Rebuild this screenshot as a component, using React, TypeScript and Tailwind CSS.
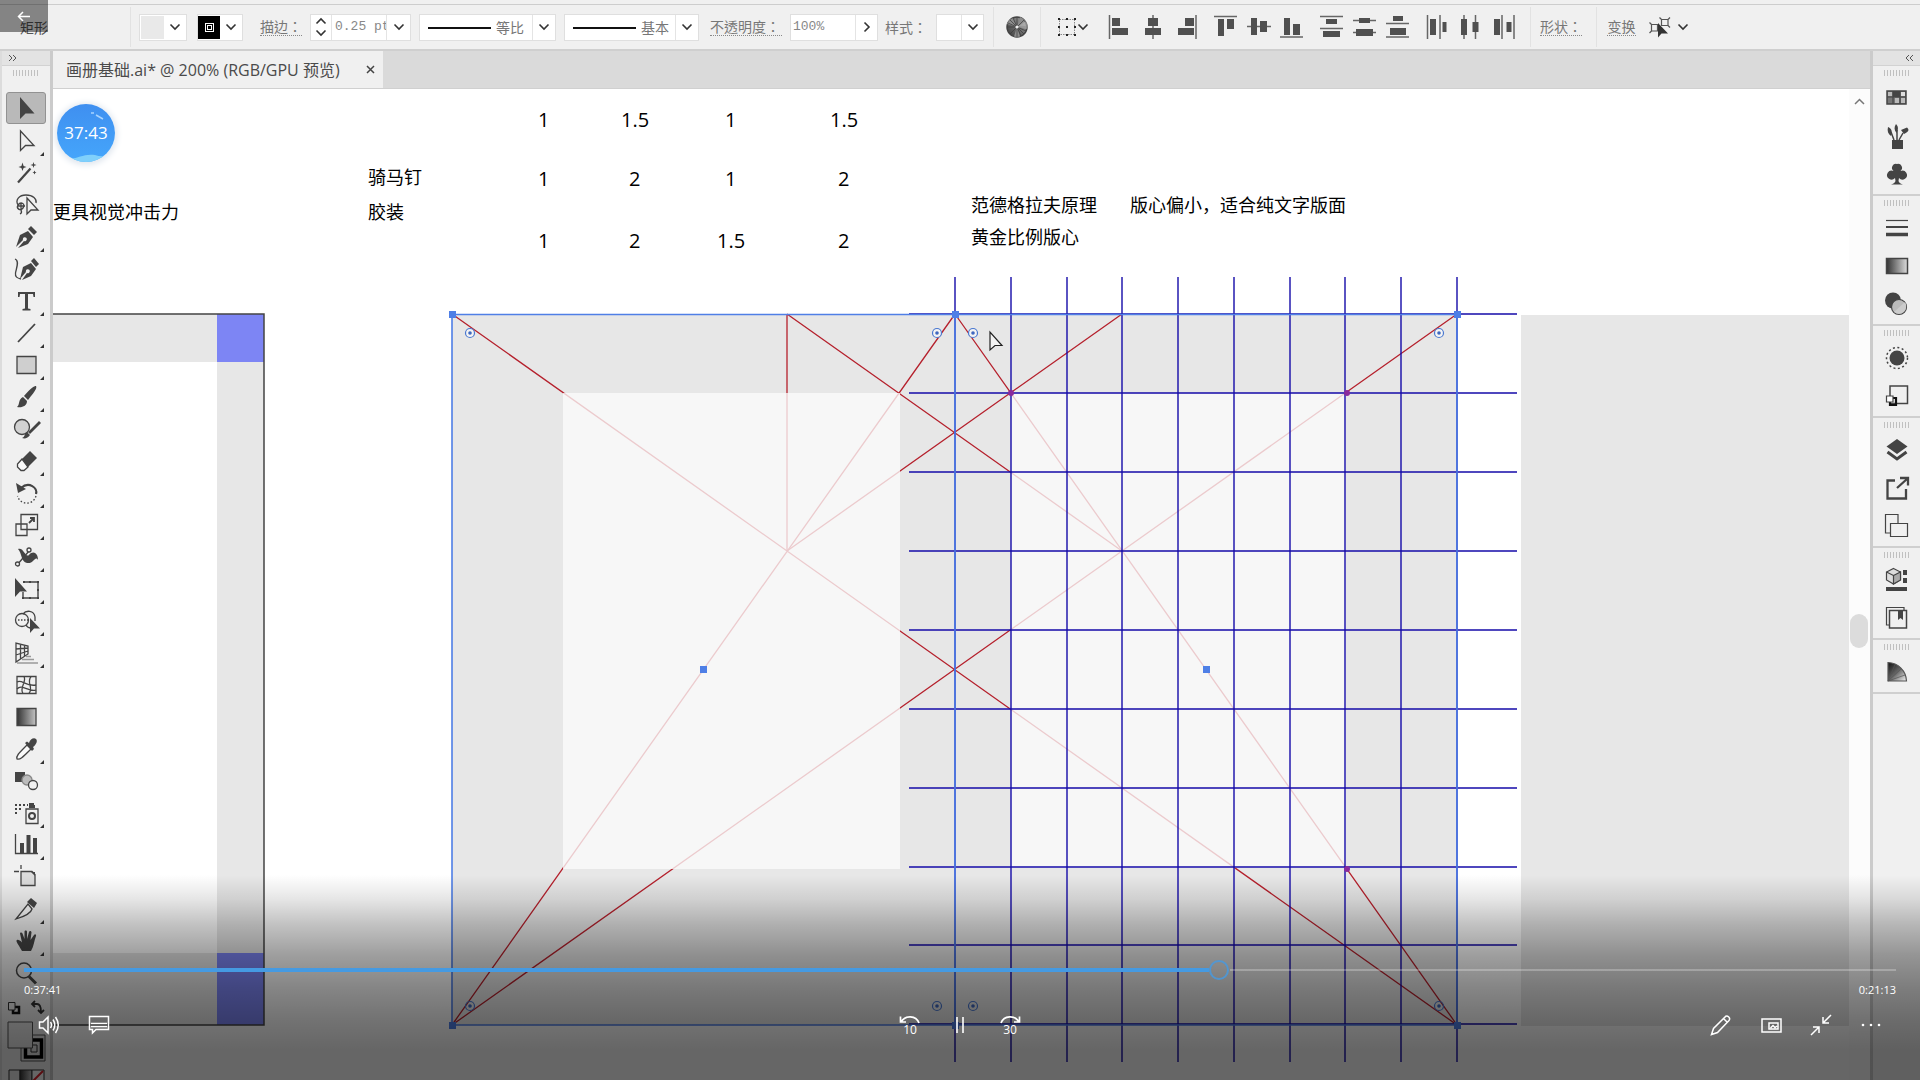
import React from "react";
import type { ReactNode } from "react";

const DARK = "#444444";

/* ---------- shared glyphs ---------- */

function Chevron({ className = "" }: { className?: string }) {
  return (
    <svg width="12" height="8" viewBox="0 0 12 8" className={className} fill="none" stroke="#333" strokeWidth="1.6">
      <path d="M1.5 1.5 L6 6 L10.5 1.5" />
    </svg>
  );
}

function Grip() {
  return (
    <svg width="26" height="6" viewBox="0 0 26 6" stroke="#c0c0c0" strokeWidth="1">
      <path d="M.5 0V6M3.5 0V6M6.5 0V6M9.5 0V6M12.5 0V6M15.5 0V6M18.5 0V6M21.5 0V6M24.5 0V6" />
    </svg>
  );
}

function Separator({ className = "" }: { className?: string }) {
  return <div className={`h-[40px] w-px shrink-0 bg-[#e2e2e2] ${className}`} />;
}

/* ---------- options bar ---------- */

const LABEL =
  "font-['Noto_Sans_CJK_TC','Noto_Sans_CJK_SC',sans-serif] text-[14px] leading-[17px] text-[#777] whitespace-nowrap shrink-0";
const BOX = "flex h-[27px] shrink-0 items-stretch border border-[#dfdfdf] bg-white";

function StrokeSelect({ label, text, className }: { label: string; text: string; className: string }) {
  return (
    <div className={`relative ${BOX} ${className}`}>
      <svg className="pointer-events-none absolute top-0 left-2" width="63" height="25">
        <path d="M0 13H63" stroke="#111" strokeWidth="2" />
      </svg>
      <select
        aria-label={label}
        className="w-full appearance-none bg-transparent pl-[76px] text-[14px] text-[#777] outline-none"
      >
        <option>{text}</option>
      </select>
      <div className="pointer-events-none absolute inset-y-0 right-0 flex w-[23px] items-center justify-center border-l border-[#e4e4e4]">
        <Chevron />
      </div>
    </div>
  );
}

const SOLID = "fill-[#505050] stroke-none";

const alignIcons: { name: string; cls: string; art: ReactNode }[] = [
  { name: "左对齐", cls: "", art: <><path d="M1.5 0V24" /><path className={SOLID} d="M4 3h8v8H4zM4 13h16v7H4z" /></> },
  { name: "水平居中", cls: "ml-[9px]", art: <><path d="M12 0V24" /><path className={SOLID} d="M7 3h10v8H7zM4 13h16v7H4z" /></> },
  { name: "右对齐", cls: "ml-[9px]", art: <><path d="M22 0V24" /><path className={SOLID} d="M11 3h9v8h-9zM4 13h16v7H4z" /></> },
  { name: "顶对齐", cls: "ml-4", art: <><path d="M0 1.5H23" /><path className={SOLID} d="M4 4h6v17H4zM13 4h7v10h-7z" /></> },
  { name: "垂直居中", cls: "ml-[9px]", art: <><path d="M0 11.5H24" /><path className={SOLID} d="M4 3h6v17H4zM13 6h7v11h-7z" /></> },
  { name: "底对齐", cls: "ml-[9px]", art: <><path d="M0 22H23" /><path className={SOLID} d="M4 3h6v17H4zM13 9h7v11h-7z" /></> },
  { name: "垂直顶分布", cls: "ml-4", art: <><path d="M0 1.5H23M0 13.5H23" /><path className={SOLID} d="M6 4h11v5H6zM3 16h17v6H3z" /></> },
  { name: "垂直居中分布", cls: "ml-[9px]", art: <><path d="M0 5.5H23M0 17.5H23" /><path className={SOLID} d="M6 3h11v5H6zM3 14h17v7H3z" /></> },
  { name: "垂直底分布", cls: "ml-[9px]", art: <><path d="M0 8.5H23M0 22H23" /><path className={SOLID} d="M7 1h10v5H7zM4 13h16v7H4z" /></> },
  { name: "水平左分布", cls: "ml-4", art: <><path d="M1.5 0V24M14 0V24" /><path className={SOLID} d="M4 4h6v16H4zM16.5 7h4v10h-4z" /></> },
  { name: "水平居中分布", cls: "ml-[9px]", art: <><path d="M5 0V24M16.5 0V24" /><path className={SOLID} d="M2 4h6v16H2zM13.5 7h6v10h-6z" /></> },
  { name: "水平右分布", cls: "ml-[9px]", art: <><path d="M10 0V24M22 0V24" /><path className={SOLID} d="M2 4h6v16H2zM14.5 7h5v10h-5z" /></> },
];

function OptionsBar() {
  return (
    <header className="shrink-0 border-b-2 border-[#cfcfcf] bg-[#f0f0f0] pt-1">
      <div className="flex h-[45px] items-center border-t border-[#cdcdcd] pl-5 pr-4">
        <span className="w-[110px] shrink-0 text-[14px] text-[#555]">矩形</span>
        <Separator />
        <button aria-label="填色" className={`${BOX} ml-2 w-[48px]`}>
          <span className="my-px ml-px w-[23px] bg-[#e9e9e9]" />
          <span className="flex flex-1 items-center justify-center"><Chevron /></span>
        </button>
        <button aria-label="描边颜色" className={`${BOX} ml-[10px] w-[46px]`}>
          <span className="my-px flex w-[22px] items-center justify-center bg-black">
            <span className="flex size-[9px] items-center justify-center border border-white bg-black">
              <span className="size-[5px] border border-white" />
            </span>
          </span>
          <span className="flex flex-1 items-center justify-center"><Chevron /></span>
        </button>
        <label htmlFor="stroke" className={`${LABEL} ml-[17px] w-[42px] border-b border-dotted border-[#888]`}>描边：</label>
        <div className={`${BOX} ml-2 w-[101px]`}>
          <button aria-label="调整粗细" className="flex w-[21px] flex-col items-center justify-around border-r border-[#e4e4e4]">
            <Chevron className="rotate-180" />
            <Chevron />
          </button>
          <input
            id="stroke"
            defaultValue="0.25 pt"
            className="w-[55px] border-r border-[#e4e4e4] pl-[3px] font-[Liberation_Mono,monospace] text-[13px] text-[#888] outline-none"
          />
          <button aria-label="粗细选项" className="flex flex-1 items-center justify-center"><Chevron /></button>
        </div>
        <StrokeSelect label="变量宽度" text="等比" className="ml-2 w-[137px]" />
        <StrokeSelect label="画笔定义" text="基本" className="ml-2 w-[135px]" />
        <label htmlFor="opacity" className={`${LABEL} ml-[11px] w-[72px] border-b border-dotted border-[#888]`}>不透明度：</label>
        <div className={`${BOX} ml-2 w-[88px]`}>
          <input
            id="opacity"
            defaultValue="100%"
            className="w-[65px] border-r border-[#e4e4e4] pl-[2px] font-[Liberation_Mono,monospace] text-[13px] text-[#888] outline-none"
          />
          <button aria-label="不透明度滑块" className="flex flex-1 items-center justify-center"><Chevron className="-rotate-90" /></button>
        </div>
        <span className={`${LABEL} ml-[7px] w-[44px]`}>样式：</span>
        <button aria-label="样式" className={`${BOX} ml-[7px] w-[48px]`}>
          <span className="w-[25px] border-r border-[#e4e4e4]" />
          <span className="flex flex-1 items-center justify-center"><Chevron /></span>
        </button>
        <Separator className="ml-[9px]" />
        <button aria-label="重新着色" className="ml-3 shrink-0">
          <svg width="22" height="22" viewBox="0 0 22 22">
            <defs>
              <linearGradient id="wheel" x1="0" y1="1" x2="1" y2="0">
                <stop offset="0" stopColor="#3c3c3c" />
                <stop offset=".5" stopColor="#6c6c6c" />
                <stop offset="1" stopColor="#a5a5a5" />
              </linearGradient>
            </defs>
            <circle cx="11" cy="11" r="10" fill="url(#wheel)" stroke="#444" strokeWidth="1.5" />
            <path d="M11 11L1 8A10 10 0 0 1 7 2ZM11 11L14 1A10 10 0 0 1 19 5ZM11 11L8 20.500A10 10 0 0 0 14 20.500Z" fill="#8d8d8d" />
            <path d="M11 1V21M1 11H21M4 4L18 18M18 4L4 18M7 2L15 20M2 7L20 15" stroke="#3a3a3a" strokeWidth=".7" />
            <path d="M11 11L20 5A11 11 0 0 1 21 13Z" fill="#ccc" opacity=".5" />
            <circle cx="11" cy="11" r="1.6" fill="#eee" />
          </svg>
        </button>
        <Separator className="ml-3" />
        <button aria-label="对齐所选对象" className="ml-4 flex shrink-0 items-center">
          <svg width="20" height="20" viewBox="0 0 20 20">
            <path d="M2.5 2.5H17.5V17.5H2.5Z" fill="none" stroke="#888" strokeDasharray="1.5 1" />
            <path d="M1 1h2v2H1zM9 1h2v2H9zM17 1h2v2h-2zM1 9h2v2H1zM9 9h2v2H9zM17 9h2v2h-2zM1 17h2v2H1zM9 17h2v2H9zM17 17h2v2h-2z" fill="#222" />
          </svg>
          <Chevron />
        </button>
        <div className="ml-[19px] flex shrink-0">
          {alignIcons.map((a) => (
            <button key={a.name} aria-label={a.name} className={a.cls}>
              <svg width="24" height="24" viewBox="0 0 24 24" fill="none" stroke="#666" strokeWidth="1.5">{a.art}</svg>
            </button>
          ))}
        </div>
        <Separator className="ml-[14px]" />
        <span className={`${LABEL} ml-[9px] w-[42px] border-b border-dotted border-[#888]`}>形状：</span>
        <Separator className="ml-[14px]" />
        <button className={`${LABEL} ml-[10px] w-[29px] border-b border-dotted border-[#888]`}>变换</button>
        <button aria-label="隔离选中的对象" className="ml-[13px] flex shrink-0 items-center gap-[6px]">
          <svg width="22" height="22" viewBox="0 0 22 22" fill="none" stroke="#555" strokeWidth="1.2">
            <path d="M12.5 3.5H19V9.500H12.5ZM10.5 1.5L12.5 3.5M21 1.5L19 3.5M21 11.5L19 9.5" />
            <path d="M2.5 8.5H8.5V15H2.5ZM.5 6.5L2.5 8.5M.5 17L2.5 15" />
            <path d="M9 7V21.5L12.5 17.5H19Z" fill="#333" stroke="none" />
          </svg>
          <Chevron />
        </button>
      </div>
    </header>
  );
}

/* ---------- left tools ---------- */

const F = { fill: DARK, stroke: "none" };

const tools: { name: string; more?: boolean; art: ReactNode }[] = [
  { name: "选择", art: <path {...F} d="M6 1V23L11.5 17.5H20.5Z" /> },
  { name: "直接选择", more: true, art: <path d="M6.5 2V21.5L11.5 16.5H20Z" /> },
  { name: "魔棒", art: <><path strokeWidth="2.2" d="M4 21.5L16.5 7.5" /><path {...F} d="M8.500 1.500L9.600 5L12.500 6L9.600 7L8.500 10L7.400 7L4.500 6L7.400 5ZM19.500 1L20.200 3.200L22.500 4L20.200 4.800L19.500 7L18.800 4.800L16.500 4L18.800 3.200ZM20.500 9.500L21.200 11L22.500 11.500L21.200 12L20.500 13.500L19.800 12L18.500 11.500L19.800 11Z" /></> },
  { name: "套索", art: <><path d="M4 12C1 7 5 2 12 2S23 6 22 10M4 12C7 8 12 11 9 15S2 15 4 12M7 10V17C8 19 8 20 6 21M3 13H11" /><path fill="#f0f0f0" d="M13 5V21L17 17H24Z" /></> },
  { name: "钢笔", more: true, art: <><path {...F} d="M2 22L6 10L14 6L19 12L14 19L4 23L10 16A2 2 0 1 0 9 15Z" /><path {...F} d="M14 4L17 1L23 7L20 10Z" /></> },
  { name: "曲率", art: <><path d="M1 2C6 4 2 12 1.5 16S3 21 7 22" /><path {...F} d="M6 22L9 10L17 6L22 12L17 19L8 23L13 16A2 2 0 1 0 12 15Z" /><path {...F} d="M17 4L20 1L25 7L22 10Z" /></> },
  { name: "文字", more: true, art: <path {...F} d="M4 3H21V8H19.5L19 5H14V19.5L16.5 20V21.5H8.5V20L11 19.5V5H6L5.5 8H4Z" /> },
  { name: "直线段", more: true, art: <path strokeWidth="1.8" d="M4 21L21 3" /> },
  { name: "矩形", more: true, art: <path fill="#cfcfcf" d="M3 3.5H22V20.5H3Z" /> },
  { name: "画笔", more: true, art: <path {...F} d="M22 1C23 3 22 5 14 15L10 11C17 3 20 1 22 1ZM9 12L13 16C13 21 8 23 3 22C6 20 4 14 9 12Z" /> },
  { name: "斑点画笔", more: true, art: <><circle cx="8" cy="10" r="7.5" fill="#d2d2d2" /><path {...F} d="M25 4L27 6L16 17L14 15ZM13 15L16 18C14 21 11 22 8 21C11 20 10 17 13 15Z" /></> },
  { name: "橡皮擦", more: true, art: <><path {...F} d="M8 10L16 2L23 9L14 18Z" /><path d="M8 10L3.5 15V18L7 21.5H10L14 18Z" fill="#fafafa" /></> },
  { name: "旋转", more: true, art: <><path strokeWidth="2.2" d="M7 7C15 0 24 7 22 13" /><path {...F} d="M2 2L4 12L12 8Z" /><path strokeDasharray="1.5 2" d="M22 15C19 25 6 24 3.5 15" /></> },
  { name: "比例缩放", more: true, art: <><path d="M7 1.5H23.5V16.5H7ZM2 11H13V22.5H2Z" /><path d="M15 10L20 5M16 5H20V9" strokeWidth="1.8" /></> },
  { name: "宽度", more: true, art: <><path {...F} d="M4 4C10 2 11 13 15 10C19 5 24 8 24 15C21 10 20 19 13 18C7 17 8 8 4 4Z" /><path d="M3 20L15 6" /><circle cx="3.5" cy="19" r="2" fill="#f0f0f0" /><circle cx="15" cy="5" r="2" fill="#f0f0f0" /></> },
  { name: "自由变换", more: true, art: <><path strokeWidth="1.4" d="M10 5H24V21H9V15" /><path {...F} d="M1 1V20L6 14.5H13ZM9 4h2v2h-2zM15 4h2v2h-2zM23 4h2v2h-2zM23 12h2v2h-2zM23 20h2v2h-2zM15 20h2v2h-2zM8 20h2v2h-2z" /></> },
  { name: "形状生成器", more: true, art: <><circle cx="8" cy="11" r="6.5" /><path d="M9 5C12 1 20 1 21 8L21 12M12 16C13 18 15 19 17 19" /><path strokeDasharray="1.5 1.5" d="M4 11H16" /><path {...F} d="M16 9V24L20 19.5H26Z" /></> },
  { name: "透视网格", more: true, art: <><path d="M2 2V21L14 13V5ZM6.5 3V18M10.5 4V15M2 8L14 7M2 14L14 10" /><path stroke="#999" d="M12 15.5H17M8 18.5H20M3 22H24" /></> },
  { name: "网格", art: <><path d="M3 3.5H22V20.5H3Z" /><path d="M3 9C8 6 12 14 22 12M3 16C8 10 15 20 22 17M10 3.5C13 9 5 14 9 20.5M17 3.5C12 10 20 14 15 20.5" /></> },
  { name: "渐变", art: <path fill="url(#toolGradient)" d="M3 3.5H22V20.5H3Z" /> },
  { name: "吸管", more: true, art: <><path d="M3 22C2 19 4 17 13 8L17 12C8 21 6 23 3 22Z" fill="#fafafa" /><path {...F} d="M11 6L13 4.5L15 6C16 2 20 0 22 2S22 8 19 10L20 12L18 14Z" /></> },
  { name: "混合", art: <><path {...F} d="M1 3H11V13H1Z" /><circle cx="13" cy="11" r="5" fill="#bcbcbc" stroke="#888" /><circle cx="19" cy="16" r="4.5" fill="#f0f0f0" /></> },
  { name: "符号喷枪", more: true, art: <><path fill="#f0f0f0" d="M12 8H24V22.5H12Z" /><circle cx="18" cy="15" r="3" strokeWidth="2" /><path {...F} d="M15 2h5v2h1v3h-6zM1 3h2v2H1zM5 3h2v2H5zM9 3h2v2H9zM13 3h1v2h-1zM1 7h2v2H1zM5 7h2v2H5zM1 11h2v2H1z" /></> },
  { name: "柱形图", more: true, art: <><path d="M1.5 1V20.5H24" /><path {...F} d="M6 10h4v10H6zM12.5 2h4v18h-4zM19 5h4v15h-4z" /></> },
  { name: "画板", art: <><path d="M7 6.5H18L21 9.5V20.5H7Z" fill="#dcdcdc" /><path d="M7 0V4M0 6.5H5" /><path {...F} d="M17 7H21V11Z" /></> },
  { name: "切片", more: true, art: <><path d="M2 22L14 7L18 12C17 16 12 19 2 22Z" fill="#fafafa" /><path {...F} d="M13 5L17 1L23 6L20 11Z" /></> },
  { name: "抓手", more: true, art: <path {...F} d="M8 22C6 18 2 13 2.500 11.500S6 11 8 13.500L6 4.500C6 3 8 3 8.500 4.500L10.500 10V2.500C10.500 1 13 1 13 2.500V10L15 3C15.500 1.500 17.500 2 17.500 3.500L16.500 11L20 6C21 4.500 22.500 5.500 22 7C20 12 20 17 17 22Z" /> },
  { name: "缩放", art: <><circle cx="10" cy="9.5" r="7.5" strokeWidth="1.5" /><path strokeWidth="3" d="M15 15.5L22 22.5" /></> },
];

function Tools() {
  return (
    <aside className="flex w-[53px] shrink-0 flex-col overflow-hidden border-r-[3px] border-l-2 border-[#cbcbcb] border-l-[#dcdcdc] bg-[#f0f0f0]">
      <div className="flex h-[15px] shrink-0 items-center border-b border-[#d2d2d2] bg-[#e3e3e3] pl-[6px]">
        <svg width="10" height="8" viewBox="0 0 10 8" fill="none" stroke="#555"><path d="M1 1L4 4L1 7M5 1L8 4L5 7" /></svg>
      </div>
      <div className="flex h-[26px] shrink-0 justify-center pt-1"><Grip /></div>
      <svg width="0" height="0" className="absolute">
        <defs>
          <linearGradient id="toolGradient"><stop stopColor="#333" /><stop offset="1" stopColor="#c4c4c4" /></linearGradient>
        </defs>
      </svg>
      {tools.map((t, i) => (
        <button
          key={t.name + i}
          aria-label={t.name + "工具"}
          className={
            i === 0
              ? "relative mx-1 mb-px flex h-8 shrink-0 items-center justify-center rounded-[3px] border border-[#929292] bg-[#b9b9b9]"
              : "relative mx-1 flex h-8 shrink-0 items-center justify-center pr-px"
          }
        >
          <svg width="24" height="24" viewBox="0 0 24 24" className="overflow-visible" fill="none" stroke={DARK} strokeWidth="1.3">{t.art}</svg>
          {t.more && (
            <svg className="absolute right-[2px] bottom-[1px]" width="4" height="4"><path d="M4 0V4H0Z" fill="#333" /></svg>
          )}
        </button>
      ))}
      <div className="flex h-[32px] shrink-0 items-center justify-between px-[5px] pt-[5px]">
        <svg width="14" height="14" viewBox="0 0 14 14" fill="none"><path d="M6 6H12V12H6Z" stroke="#111" strokeWidth="2.5" /><path d="M1.5 1.5H8V9H1.5Z" fill="#f4f4f4" stroke="#333" /></svg>
        <svg width="15" height="15" viewBox="0 0 15 15" fill="none" stroke="#333" strokeWidth="1.8"><path d="M2 4H7Q11 4 11 12M5 1L2 4L5 7M8 10L11 13L14 10" /></svg>
      </div>
      <svg className="shrink-0 self-center" width="39" height="42" viewBox="0 0 39 42">
        <path d="M14 14H38V40H14Z" fill="#e6e6e6" stroke="#555" />
        <path d="M18.5 19H34.5V36H18.5Z" fill="none" stroke="#000" strokeWidth="3.5" />
        <path d="M24 24H30V31H24Z" fill="none" stroke="#333" />
        <path d="M1 1H25.5V27H1Z" fill="#e8e8e8" stroke="#555" />
      </svg>
      <svg className="mt-[6px] shrink-0 self-center" width="37" height="18" viewBox="0 0 37 18">
        <path d="M1 1H12V17H1Z" fill="#e6e6e6" stroke="#333" />
        <path d="M12 1H24V17H12Z" fill="url(#toolGradient)" stroke="#333" />
        <path d="M24 1H36V17H24Z" fill="#fff" stroke="#333" />
        <path d="M25 12L35 2" stroke="#e0202a" strokeWidth="2" />
      </svg>
    </aside>
  );
}

/* ---------- right panel dock ---------- */

const panelGroups: { name: string; art: ReactNode }[][] = [
  [
    { name: "色板", art: <><path d="M2 5H21V18H2Z" fill="#777" strokeWidth="1.5" /><path {...F} d="M8 5h7v6H8z" /><path fill="#ddd" stroke="none" d="M16 6h4v4h-4z" /><path fill="#bbb" stroke="none" d="M3 6h4v4H3zM10 12h4v5h-4zM16 12h4v5h-4z" /><path d="M8 5V18M15 5V18M2 11H21" /></> },
    { name: "画笔", art: <><path {...F} d="M7 16H18V25H7Z" /><path d="M9 16L6 8M12 16V6M14 16L18 9" strokeWidth="1.5" /><path {...F} d="M3 3C6 4 8 7 6 12C3 10 2 7 3 3ZM11 0C14 3 13 6 11.5 9C9 6 9 3 11 0ZM16 6L22 3.5C25 6 23 8 19 10Z" /></> },
    { name: "符号", art: <path {...F} d="M12 2A4 4 0 0 1 15.5 9A4.5 4.5 0 1 1 14 16L13.5 19C14 21 16 22 18 22.5H6C8 22 10 21 10.5 19L10 16A4.5 4.5 0 1 1 8.5 9A4 4 0 0 1 12 2Z" /> },
  ],
  [
    { name: "描边", art: <><path d="M1 4.5H23" /><path strokeWidth="2" d="M1 11H23" /><path strokeWidth="3.5" d="M1 18.5H23" /></> },
    { name: "渐变", art: <path d="M1.5 4.5H22.5V19.5H1.5Z" fill="url(#dockGradient)" strokeWidth="1.5" /> },
    { name: "透明度", art: <><circle cx="8" cy="8.5" r="8" {...F} /><circle cx="14" cy="15" r="7.5" fill="#bbb" /><path d="M9 20A7.5 7.5 0 0 0 20 10Z" fill="#ccc" stroke="none" /></> },
  ],
  [
    { name: "外观", art: <><circle cx="12" cy="12" r="7.5" {...F} /><circle cx="12" cy="12" r="10.5" strokeDasharray="2 2.5" strokeWidth="1.5" /></> },
    { name: "图形样式", art: <><path d="M5 2H22.5V19.5H5Z" strokeWidth="1.5" /><path d="M5 14H11V21H5Z" strokeWidth="2.2" stroke="#111" /><path d="M1.5 12H8V18H1.5Z" fill="#fff" /></> },
  ],
  [
    { name: "图层", art: <><path {...F} d="M12 1L22.5 8.5L12 16L1.5 8.5Z" /><path strokeWidth="3" d="M2.5 14L12 21L21.5 14" /></> },
    { name: "资源导出", art: <path strokeWidth="2.3" d="M10 4.5H2.5V22.5H21V13M12 12L22 3M15 2H23V9.5" /> },
    { name: "画板", art: <><path d="M.5 .5H13V19H.5Z" /><path d="M5.5 9.5H22.5V22.5H5.5Z" fill="#f0f0f0" /></> },
  ],
  [
    { name: "库", art: <><path fill="#ddd" d="M8.5 .5L15.5 4V12L8.5 16L1.5 12V4Z" /><path fill="#aaa" d="M8.5 7.5L15.5 4V12L8.5 16Z" /><path d="M1.5 4L8.5 7.5" /><path {...F} d="M18 2h4v5h-4zM18 10h4v5h-4zM1 19h21v4H1z" /></> },
    { name: "属性", art: <><path d="M1.5 1.5H19V19H1.5Z" /><path fill="#f0f0f0" strokeWidth="1.5" d="M4.5 4.5H21.5V22H4.5Z" /><path {...F} d="M13 5h5v9l-2.5-2L13 14z" /></> },
  ],
  [{ name: "颜色参考", art: <><path d="M3 2.5A19 19 0 0 1 21.500 21H3Z" fill="url(#fan)" stroke="#555" /><path d="M3 21L10 4.5M3 21L16 9M3 21L20 15" stroke="#555" strokeWidth=".7" /></> }],
];

function Dock() {
  return (
    <aside className="w-[50px] shrink-0 border-l-[3px] border-[#cbcbcb] bg-[#f0f0f0]">
      <div className="flex h-[15px] items-center justify-end border-b border-[#d2d2d2] bg-[#e3e3e3] pr-[6px]">
        <svg width="10" height="8" viewBox="0 0 10 8" fill="none" stroke="#555"><path d="M5 1L2 4L5 7M9 1L6 4L9 7" /></svg>
      </div>
      <svg width="0" height="0" className="absolute">
        <defs>
          <linearGradient id="dockGradient"><stop stopColor="#333" /><stop offset="1" stopColor="#ddd" /></linearGradient>
          <linearGradient id="fan" x1="0" y1="0" x2="1" y2="1"><stop stopColor="#111" /><stop offset=".5" stopColor="#666" /><stop offset="1" stopColor="#f5f5f5" /></linearGradient>
        </defs>
      </svg>
      {panelGroups.map((g, i) => (
        <div key={i} className="flex flex-col items-center border-b-2 border-[#cfcfcf] py-1">
          <Grip />
          {g.map((p) => (
            <button key={p.name} aria-label={p.name} className="flex h-[38px] w-full items-center justify-center pt-[6px]">
              <svg width="24" height="24" viewBox="0 0 24 24" className="overflow-visible" fill="none" stroke={DARK} strokeWidth="1.2">{p.art}</svg>
            </button>
          ))}
        </div>
      ))}
    </aside>
  );
}

/* ---------- canvas ---------- */

const columns = [955, 1011, 1067, 1122, 1178, 1234, 1290, 1345, 1401, 1457];
const rows = [314, 393, 472, 551, 630, 709, 788, 867, 945, 1024];
const corners = [[470, 333], [937, 333], [973, 333], [1439, 333], [470, 1006], [937, 1006], [973, 1006], [1439, 1006]];
const handles = [[452, 314], [955, 314], [1457, 314], [452, 1025], [955, 1025], [1457, 1025], [703, 669], [1206, 669]];

function Artwork() {
  return (
    <svg className="absolute top-0 left-0" width="1817" height="991" viewBox="53 89 1817 991" fill="none">
      {/* left artboard */}
      <path d="M53 314H264V1025H53Z" fill="#fff" />
      <path d="M53 314H264V1025H53V953H217V362H53Z" fill="#e7e7e7" />
      <path d="M217 314H264V362H217ZM217 953H264V1025H217Z" fill="#7d85f4" />
      <path d="M50 314H264V1025H50" stroke="#444" strokeWidth="1.5" />

      {/* spread */}
      <path d="M452 314H1457V1025H452Z" fill="#e7e7e7" />
      <path d="M1521 315H1849V1026H1521Z" fill="#e7e7e7" />
      <g stroke="#b5202c" strokeWidth="1.3">
        <path d="M452 314L1457 1025M1457 314L452 1025M955 314L452 1025M955 314L1457 1025" />
        <path d="M787 314V551M787 314L1122 551M1122 314L787 551" />
      </g>
      <path d="M563 393H900V869H563ZM1011 393H1346V868H1011Z" fill="#fbfbfb" fillOpacity=".78" />

      {/* nine-part grid */}
      <g stroke="#140aa8" strokeWidth="1.4">
        {columns.map((x) => <path key={x} d={`M${x} 277V1062`} />)}
        {rows.map((y) => <path key={y} d={`M909 ${y}H1517`} />)}
      </g>

      {/* selection */}
      <path d="M452 314.5H1457V1025H452ZM955 314V1025" stroke="#4f7fe6" strokeWidth="1.6" />
      {handles.map(([x, y]) => <path key={`${x}-${y}`} d={`M${x - 3} ${y - 3}h7v7h-7z`} fill="#4f7fe6" />)}
      {corners.map(([x, y]) => (
        <g key={`${x}-${y}`}>
          <circle cx={x} cy={y} r="4.5" fill="#f4f4f4" fillOpacity={y > 900 ? 0 : 1} stroke="#4a78d0" strokeWidth="1.2" />
          <circle cx={x} cy={y} r="1.8" fill="#3f68c0" />
        </g>
      ))}
      <g fill="#8a2a9c">
        <circle cx="1011" cy="393" r="3" /><circle cx="1347" cy="393" r="3" /><circle cx="1347" cy="869" r="3" />
      </g>
      <path d="M990 332V350L995 345.5H1002Z" fill="#f4f4f4" stroke="#222" strokeWidth="1.2" />
    </svg>
  );
}

const NUM = "absolute font-['Open_Sans',sans-serif] text-[20px] leading-6 text-black";
const NOTE = "absolute font-['Noto_Sans_CJK_SC',sans-serif] text-[18px] leading-6 text-black whitespace-nowrap";

function Canvas() {
  return (
    <div className="relative min-h-0 flex-1 overflow-hidden bg-white">
      <Artwork />
      <p className={`${NOTE} top-[110px] left-0`}>更具视觉冲击力</p>
      <p className={`${NOTE} top-[75px] left-[315px]`}>骑马钉</p>
      <p className={`${NOTE} top-[110px] left-[315px]`}>胶装</p>
      <p className={`${NOTE} top-[103px] left-[918px]`}>范德格拉夫原理</p>
      <p className={`${NOTE} top-[103px] left-[1077px]`}>版心偏小，适合纯文字版面</p>
      <p className={`${NOTE} top-[135px] left-[918px]`}>黄金比例版心</p>

      <span className={`${NUM} top-[19px] left-[485px]`}>1</span>
      <span className={`${NUM} top-[19px] left-[568px]`}>1.5</span>
      <span className={`${NUM} top-[19px] left-[672px]`}>1</span>
      <span className={`${NUM} top-[19px] left-[777px]`}>1.5</span>
      <span className={`${NUM} top-[78px] left-[485px]`}>1</span>
      <span className={`${NUM} top-[78px] left-[576px]`}>2</span>
      <span className={`${NUM} top-[78px] left-[672px]`}>1</span>
      <span className={`${NUM} top-[78px] left-[785px]`}>2</span>
      <span className={`${NUM} top-[140px] left-[485px]`}>1</span>
      <span className={`${NUM} top-[140px] left-[576px]`}>2</span>
      <span className={`${NUM} top-[140px] left-[664px]`}>1.5</span>
      <span className={`${NUM} top-[140px] left-[785px]`}>2</span>

      <div className="absolute top-[15px] left-[4px] flex size-[58px] items-center justify-center overflow-hidden rounded-full bg-linear-to-b from-[#3f8ff0] to-[#45a6fb] font-['Open_Sans',sans-serif] text-[17px] text-white shadow-[0_1px_6px_2px_#dfe6ee]">
        <svg className="absolute inset-0" width="58" height="58" viewBox="0 0 58 58" fill="none">
          <path d="M10 54C20 56 26 49 38 51C44 53 50 53 54 48L40 60H16Z" fill="#7fd0fb" />
          <path d="M34 9H37M39 11L46 15" stroke="#a8d4ff" strokeWidth="1.5" />
        </svg>
        <span className="relative">37:43</span>
      </div>

      <div className="absolute inset-y-0 right-0 w-[21px] bg-[#fcfcfc]">
        <svg className="absolute top-[9px] left-[5px]" width="11" height="7" fill="none" stroke="#777" strokeWidth="1.5"><path d="M1 6L5.5 1.5L10 6" /></svg>
        <div className="absolute top-[525px] left-px h-[34px] w-[18px] rounded-full bg-[#dcdcdc]" />
      </div>
    </div>
  );
}

/* ---------- video player overlay ---------- */

function Player() {
  const btn = "flex size-[50px] shrink-0 items-center justify-center";
  return (
    <div className="absolute inset-x-0 bottom-0 flex h-[205px] flex-col justify-end bg-[linear-gradient(to_bottom,transparent_0%,rgba(0,0,0,.1)_12%,rgba(0,0,0,.24)_24%,rgba(0,0,0,.38)_39%,rgba(0,0,0,.48)_55%,rgba(0,0,0,.55)_70%,rgba(0,0,0,.6)_85%,rgba(0,0,0,.6)_100%)] pb-[30px] text-white">
      <input
        type="range"
        aria-label="播放进度"
        min={0}
        max={3534}
        defaultValue={2261}
        className="mx-6 h-5 appearance-none [background:linear-gradient(#459ae2,#459ae2)_left_center/63.3%_4px_no-repeat,linear-gradient(#ffffff40,#ffffff40)_right_center/35.6%_2px_no-repeat] [&::-webkit-slider-thumb]:size-5 [&::-webkit-slider-thumb]:appearance-none [&::-webkit-slider-thumb]:rounded-full [&::-webkit-slider-thumb]:border-2 [&::-webkit-slider-thumb]:border-[#459ae2cc]"
      />
      <div className="mt-px flex justify-between px-6 font-['Open_Sans',sans-serif] text-[11px] leading-[18px]">
        <span>0:37:41</span>
        <span>0:21:13</span>
      </div>
      <div className="relative mt-px flex h-[50px] items-center justify-between px-6">
        <div className="flex">
          <button aria-label="音量" className={btn}>
            <svg width="22" height="20" viewBox="0 0 22 20" fill="none" stroke="#fff" strokeWidth="1.5"><path d="M1.5 7H5L10 2V18L5 13H1.5ZM12.5 7Q14.5 10 12.5 13M15 4.5Q18.5 10 15 15.5M17.5 2Q23 10 17.5 18" /></svg>
          </button>
          <button aria-label="字幕" className={btn}>
            <svg width="22" height="20" viewBox="0 0 22 20" fill="none" stroke="#fff" strokeWidth="1.5"><path d="M1.5 1.5H20.5V14.5H8L4.5 18V14.5H1.5ZM3 8.5H19M3 11.5H19" /></svg>
          </button>
        </div>
        <div className="absolute inset-x-0 flex justify-center">
          <button aria-label="后退 10 秒" className={`${btn} flex-col font-['Open_Sans',sans-serif] text-[12px] leading-3`}>
            <svg width="22" height="9" viewBox="0 0 22 9" fill="none" stroke="#fff" strokeWidth="1.7"><path d="M2 7C6 0 17 0 20 8M1.5 1.5V7H7" /></svg>
            <span>10</span>
          </button>
          <button aria-label="暂停" className={btn}>
            <svg width="10" height="16" viewBox="0 0 10 16" stroke="#fff" strokeWidth="1.6"><path d="M2 0V16M8 0V16" /></svg>
          </button>
          <button aria-label="前进 30 秒" className={`${btn} flex-col font-['Open_Sans',sans-serif] text-[12px] leading-3`}>
            <svg width="22" height="9" viewBox="0 0 22 9" fill="none" stroke="#fff" strokeWidth="1.7"><path d="M20 7C16 0 5 0 2 8M20.5 1.5V7H15" /></svg>
            <span>30</span>
          </button>
        </div>
        <div className="flex">
          <button aria-label="编辑" className={btn}>
            <svg width="22" height="22" viewBox="0 0 22 22" fill="none" stroke="#fff" strokeWidth="1.5"><path d="M1.5 20.5L3.5 14.5L15 3C17 0 21 4 19 6.5L7.5 18.5ZM13.5 4.5L17.5 8.5" /></svg>
          </button>
          <button aria-label="迷你视图" className={btn}>
            <svg width="21" height="15" viewBox="0 0 21 15" fill="none" stroke="#fff" strokeWidth="1.5"><path d="M1 1H20V14H1Z" /><path d="M8 5H17V11H8ZM9.5 10L12 7.5L14 9.5L16 8" /></svg>
          </button>
          <button aria-label="退出全屏" className={btn}>
            <svg width="22" height="22" viewBox="0 0 22 22" fill="none" stroke="#fff" strokeWidth="1.5"><path d="M21 1L13 9M13 3V9H19M1 21L9 13M3 13H9V19" /></svg>
          </button>
          <button aria-label="更多" className={btn}>
            <svg width="20" height="4" viewBox="0 0 20 4" fill="#fff"><circle cx="2" cy="2" r="1.3" /><circle cx="10" cy="2" r="1.3" /><circle cx="18" cy="2" r="1.3" /></svg>
          </button>
        </div>
      </div>
    </div>
  );
}

export default function App() {
  return (
    <div className="relative flex h-screen flex-col overflow-hidden bg-[#f0f0f0] font-['Open_Sans','Noto_Sans_CJK_SC',sans-serif]">
      <OptionsBar />
      <div className="flex min-h-0 flex-1">
        <Tools />
        <main className="flex min-w-0 flex-1 flex-col">
          <div className="flex h-[38px] shrink-0 border-b border-[#d0d0d0] bg-[#dadada]">
            <div className="flex w-[330px] items-center justify-between bg-[#f0f0f0] pr-2 pl-[13px]">
              <span className="text-[16px] whitespace-nowrap text-[#4a4a4a]">画册基础.ai* @ 200% (RGB/GPU 预览)</span>
              <button aria-label="关闭">
                <svg width="9" height="9" viewBox="0 0 9 9" stroke="#444" strokeWidth="1.5"><path d="M1 1L8 8M8 1L1 8" /></svg>
              </button>
            </div>
          </div>
          <Canvas />
        </main>
        <Dock />
      </div>
      <button aria-label="返回" className="absolute top-0 left-0 flex h-8 w-12 items-center justify-center bg-black/45">
        <svg width="14" height="11" viewBox="0 0 14 11" fill="none" stroke="#fff" strokeWidth="1.5"><path d="M13 5.5H1.5M6 1L1.5 5.5L6 10" /></svg>
      </button>
      <Player />
    </div>
  );
}
